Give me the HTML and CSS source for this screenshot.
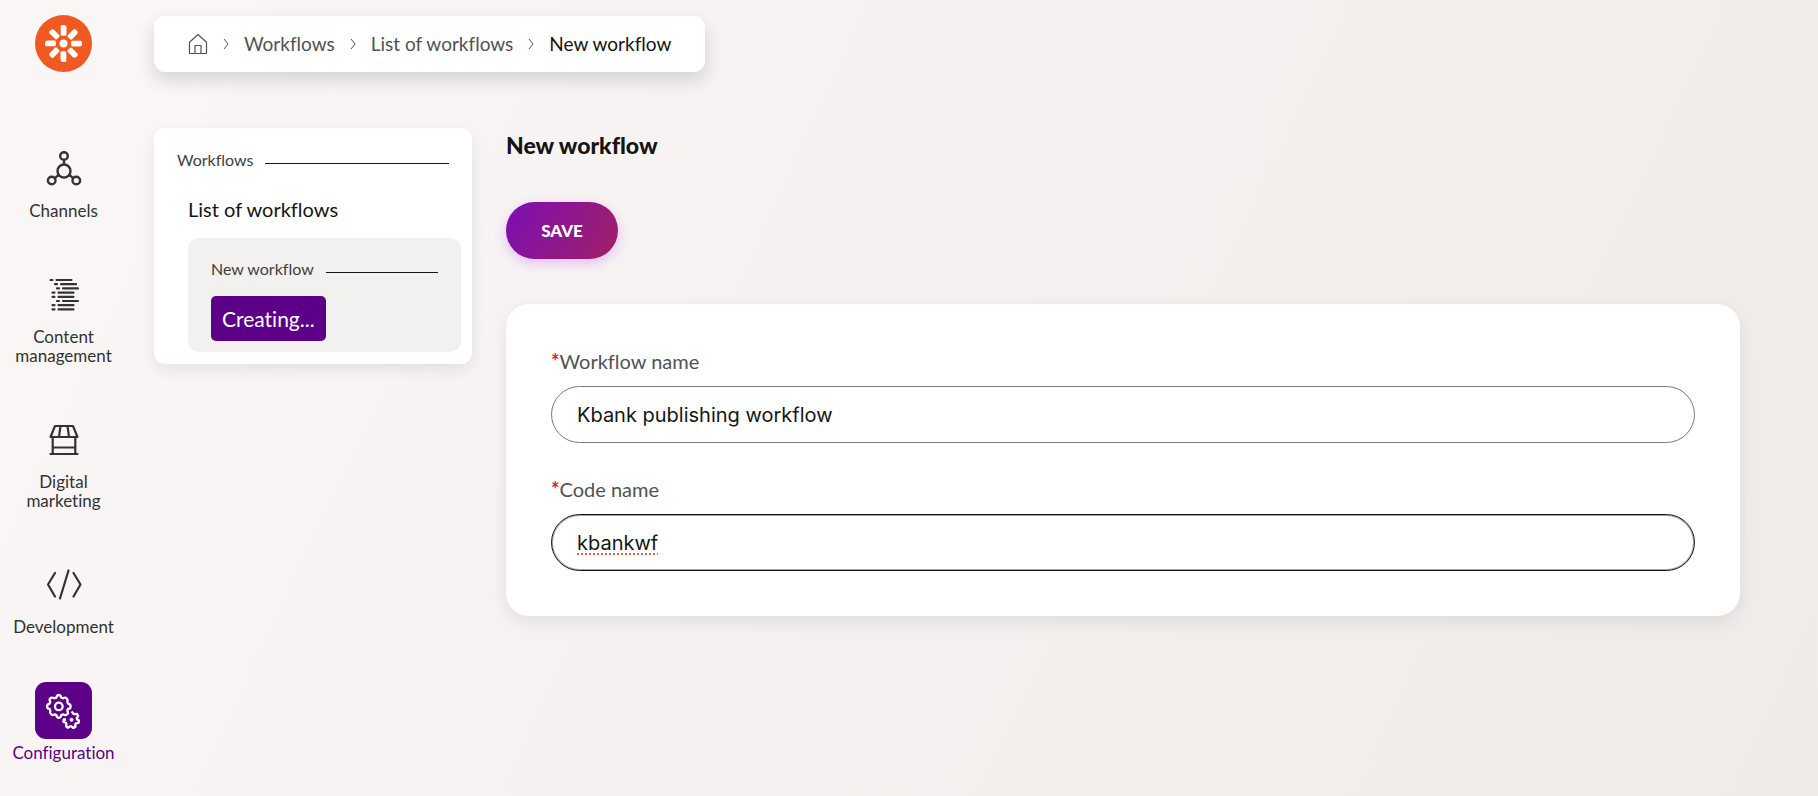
FILE: index.html
```html
<!DOCTYPE html>
<html lang="en">
<head>
<meta charset="utf-8">
<meta name="viewport" content="width=device-width, initial-scale=1">
<title>New workflow</title>
<link rel="stylesheet" href="styles.css">
</head>
<body>
<div class="app">
  <aside class="sidebar">
    <a class="logo" href="#" aria-label="Dashboard">
      <svg viewBox="0 0 57 57" width="57" height="57" aria-hidden="true">
        <circle cx="28.500" cy="28.500" r="28.500" fill="#f05a22"/>
        <circle cx="28.500" cy="28.500" r="4" fill="#fff"/>
        <g fill="#fff">
          <path id="ray" d="M25.700 11.600q0-1.600 1.600-1.600h1.400q2.800 0 2.800 2.800v6.600q0 1.400-1.400 1.400h-3q-1.400 0-1.400-1.400z"/>
          <use href="#ray" transform="rotate(45 28.500 28.500)"/>
          <use href="#ray" transform="rotate(90 28.500 28.500)"/>
          <use href="#ray" transform="rotate(135 28.500 28.500)"/>
          <use href="#ray" transform="rotate(180 28.500 28.500)"/>
          <use href="#ray" transform="rotate(225 28.500 28.500)"/>
          <use href="#ray" transform="rotate(270 28.500 28.500)"/>
          <use href="#ray" transform="rotate(315 28.500 28.500)"/>
        </g>
      </svg>
    </a>
    <nav class="menu" aria-label="Main">
      <a class="menu-item" href="#">
        <span class="menu-icon">
          <svg viewBox="0 0 36 36" width="36" height="36" fill="none" stroke="currentColor" stroke-width="2.400">
            <circle cx="18" cy="5" r="3.800"/><circle cx="18" cy="20" r="6.500"/>
            <circle cx="5.700" cy="29.500" r="3.800"/><circle cx="30.300" cy="29.500" r="3.800"/>
            <path d="M18 9v4.500M12.700 24l-4 3.100M23.300 24l4 3.100"/>
          </svg>
        </span>
        <span class="menu-label">Channels</span>
      </a>
      <a class="menu-item" href="#">
        <span class="menu-icon">
          <svg viewBox="0 0 36 36" width="36" height="36" fill="none" stroke="currentColor" stroke-width="2.200" stroke-linecap="round">
            <path d="M4.500 3h2M10.500 3h15M9 7.200h2M15 7.200h15M11 11.400h2M17 11.400h15M6.500 15.600h2M12.500 15.600h15M6.500 19.800h2M12.500 19.800h15M11 24h2M17 24h15M6.500 28.200h2M12.500 28.200h15M6.500 32.400h2M12.500 32.400h15"/>
          </svg>
        </span>
        <span class="menu-label">Content management</span>
      </a>
      <a class="menu-item" href="#">
        <span class="menu-icon">
          <svg viewBox="0 0 36 36" width="36" height="36" fill="none" stroke="currentColor" stroke-width="2.200" stroke-linecap="round" stroke-linejoin="round">
            <path d="M9 4h18l4.500 11h-27zM14.500 4l-1.500 11M21.500 4l1.500 11M6.700 15v17M29.300 15v17M6.700 25.500h22.600M4.500 32h27"/>
          </svg>
        </span>
        <span class="menu-label">Digital marketing</span>
      </a>
      <a class="menu-item" href="#">
        <span class="menu-icon">
          <svg viewBox="0 0 36 36" width="36" height="36" fill="none" stroke="currentColor" stroke-width="2.200" stroke-linecap="round" stroke-linejoin="round">
            <path d="M9 6L2 17.500 9 29.500M22.500 3.500l-8.500 28M27.500 6l7 11.500-7 12"/>
          </svg>
        </span>
        <span class="menu-label">Development</span>
      </a>
      <a class="menu-item active" href="#" aria-current="page">
        <span class="menu-icon">
          <svg viewBox="0 0 36 36" width="36" height="36" fill="none" stroke="currentColor" stroke-width="2.300" stroke-linejoin="round">
            <path d="M11.400 4.600Q11.800 2 13.800 2T16.200 4.600L18 5.300Q20.200 3.900 21.600 5.300T22.300 8.800L23 10.600Q25.600 11 25.600 13.400T23 15.900L22.300 17.700Q23.700 19.900 22.300 21.300T18 21.400L16.200 22.100Q15.800 24.900 13.800 24.900T11.400 22.100L9.600 21.400Q7.400 22.700 6 21.300T5.300 17.700L4.600 15.900Q2 15.500 2 13.400T4.600 10.600L5.300 8.800Q3.900 6.700 5.300 5.300T9.600 5.300Z"/>
            <circle cx="13.800" cy="13.400" r="3.800"/>
            <path d="M26.700 18.400l1.500 2.200 1.600.6 2.300-.3 1 2.200-1.300 2 .2 1.300 2 1.200-.5 2.300-2.400.4-.9 1.200.2 2.400-2.200 1-1.800-1.500h-1.500l-2 1.300-1.900-1.400.5-2.300-.8-1.300-2.200-.8.200-2.400h2.300"/>
            <circle cx="26.500" cy="26.800" r="1.500" fill="currentColor" stroke-width="1"/>
          </svg>
        </span>
        <span class="menu-label">Configuration</span>
      </a>
    </nav>
  </aside>

  <div class="page">
    <nav class="breadcrumb" aria-label="Breadcrumb">
      <a class="home" href="#" aria-label="Home">
        <svg viewBox="0 0 20 22" width="20" height="22" fill="none" stroke="currentColor" stroke-width="1.200" stroke-linejoin="round">
          <path d="M7 20.500H1.500V9.300L10 1.500l8.500 7.800v11.200H13v-8H7zM7 20.500h6"/>
        </svg>
      </a>
      <svg class="chevron" viewBox="0 0 6 12" width="6" height="12"><path d="M1 1l4 5-4 5"/></svg>
      <a href="#">Workflows</a>
      <svg class="chevron" viewBox="0 0 6 12" width="6" height="12"><path d="M1 1l4 5-4 5"/></svg>
      <a href="#">List of workflows</a>
      <svg class="chevron" viewBox="0 0 6 12" width="6" height="12"><path d="M1 1l4 5-4 5"/></svg>
      <span class="current" aria-current="page">New workflow</span>
    </nav>

    <div class="columns">
      <nav class="tree" aria-label="Workflows">
        <div class="tree-heading">Workflows</div>
        <div class="tree-body">
          <a class="tree-link" href="#">List of workflows</a>
          <div class="tree-group">
            <div class="tree-heading">New workflow</div>
            <a class="tree-active" href="#">Creating...</a>
          </div>
        </div>
      </nav>

      <main class="content">
        <h1 class="title">New workflow</h1>
        <button class="save" type="submit" form="workflow-form">SAVE</button>
        <form class="card" id="workflow-form">
          <div class="field">
            <label for="workflow-name"><span class="required">*</span>Workflow name</label>
            <input id="workflow-name" type="text" value="Kbank publishing workflow" spellcheck="false">
          </div>
          <div class="field">
            <label for="code-name"><span class="required">*</span>Code name</label>
            <input class="editing" id="code-name" type="text" value="kbankwf" spellcheck="false">
          </div>
        </form>
      </main>
    </div>
  </div>
</div>
</body>
</html>
```
FILE: styles.css
```css
* {
  box-sizing: border-box;
}

body {
  margin: 0;
  min-height: 100vh;
  color: #151515;
  font-family: Lato, "Open Sans", sans-serif;
  font-size: 20px;
  font-variant-ligatures: none;
  line-height: 24px;
  background: linear-gradient(115deg, #faf7f6 0%, #f5f1f0 45%, #efebe8 100%);
}

a {
  color: inherit;
  text-decoration: none;
}

.app {
  display: flex;
  min-height: 100vh;
}

/* Sidebar */
.sidebar {
  flex: none;
  display: flex;
  flex-direction: column;
  align-items: center;
  gap: 68px;
  width: 127px;
  padding-top: 15px;
}

.logo svg,
.menu-icon svg {
  display: block;
}

.menu {
  display: flex;
  flex-direction: column;
  align-items: center;
  gap: 46px;
}

.menu-item {
  display: flex;
  flex-direction: column;
  align-items: center;
  gap: 4px;
  max-width: 120px;
  color: #333;
  font-size: 17px;
  line-height: 19px;
  text-align: center;
}

.menu-icon {
  display: grid;
  place-items: center;
  width: 57px;
  height: 57px;
  border-radius: 11px;
}

.active {
  color: #5c0087;
}

.active .menu-icon {
  color: #fff;
  background: #5c0087;
}

/* Page */
.page {
  flex: 1;
  min-width: 0;
  padding: 16px 78px 48px 27px;
}

.breadcrumb {
  display: flex;
  align-items: center;
  gap: 15px;
  width: fit-content;
  height: 56px;
  padding: 0 34px;
  color: #525252;
  font-size: 19px;
  background: #fff;
  border-radius: 11px;
  box-shadow: 0 8px 18px rgba(0, 0, 0, 0.14);
}

.home svg {
  display: block;
}

.chevron {
  fill: none;
  stroke: #525252;
}

.current {
  color: #151515;
}

.columns {
  display: flex;
  align-items: flex-start;
  gap: 34px;
  margin-top: 56px;
}

/* Workflow tree */
.tree {
  flex: none;
  width: 318px;
  padding: 20px 11px 12px;
  background: #fff;
  border-radius: 11px;
  box-shadow: 0 6px 16px rgba(0, 0, 0, 0.08);
}

.tree-heading {
  display: flex;
  align-items: center;
  gap: 12px;
  padding: 0 12px;
  color: #404040;
  font-size: 16px;
}

.tree-heading::after {
  content: "";
  flex: 1;
  height: 1px;
  margin-top: 6px;
  background: #151515;
}

.tree-body {
  padding: 25px 0 0 23px;
}

.tree-link {
  display: block;
}

.tree-group {
  margin-top: 17px;
  padding: 19px 11px 11px;
  background: #f3f1f0;
  border-radius: 11px;
}

.tree-active {
  display: inline-block;
  margin: 15px 0 0 12px;
  padding: 11px;
  color: #fff;
  font-size: 21px;
  line-height: 23px;
  vertical-align: top;
  background: #5c0087;
  border-radius: 5px;
}

/* Content */
.content {
  flex: 1;
  min-width: 0;
}

.title {
  margin: 3px 0 43px;
  font-size: 23px;
  font-weight: 900;
  line-height: 28px;
}

.save {
  display: block;
  min-width: 112px;
  height: 57px;
  padding: 0 33px;
  color: #fff;
  font: 900 17px/24px Lato, "Open Sans", sans-serif;
  background: linear-gradient(120deg, #7d0fb0 5%, #9f2068 95%);
  border: 0;
  border-radius: 29px;
  box-shadow: 0 4px 12px rgba(190, 80, 255, 0.32);
}

.card {
  display: grid;
  gap: 34px;
  margin-top: 45px;
  padding: 45px;
  background: #fff;
  border-radius: 23px;
  box-shadow: 0 6px 18px rgba(0, 0, 0, 0.08);
}

.field {
  display: grid;
  gap: 13px;
}

.field label {
  color: #525252;
}

.required {
  color: #df2020;
  font-weight: 700;
}

.field input {
  width: 100%;
  height: 57px;
  padding: 0 25px;
  color: #151515;
  font: 20px/24px Inter, sans-serif;
  background: #fff;
  border: 1px solid #7a7a7a;
  border-radius: 29px;
  outline: 0;
}

.field .editing {
  border-color: #151515;
  box-shadow: inset 0 0 0 1px rgba(21, 21, 21, 0.4);
  text-decoration: underline dotted #ee5555 2px;
  text-underline-offset: 4px;
}
```
